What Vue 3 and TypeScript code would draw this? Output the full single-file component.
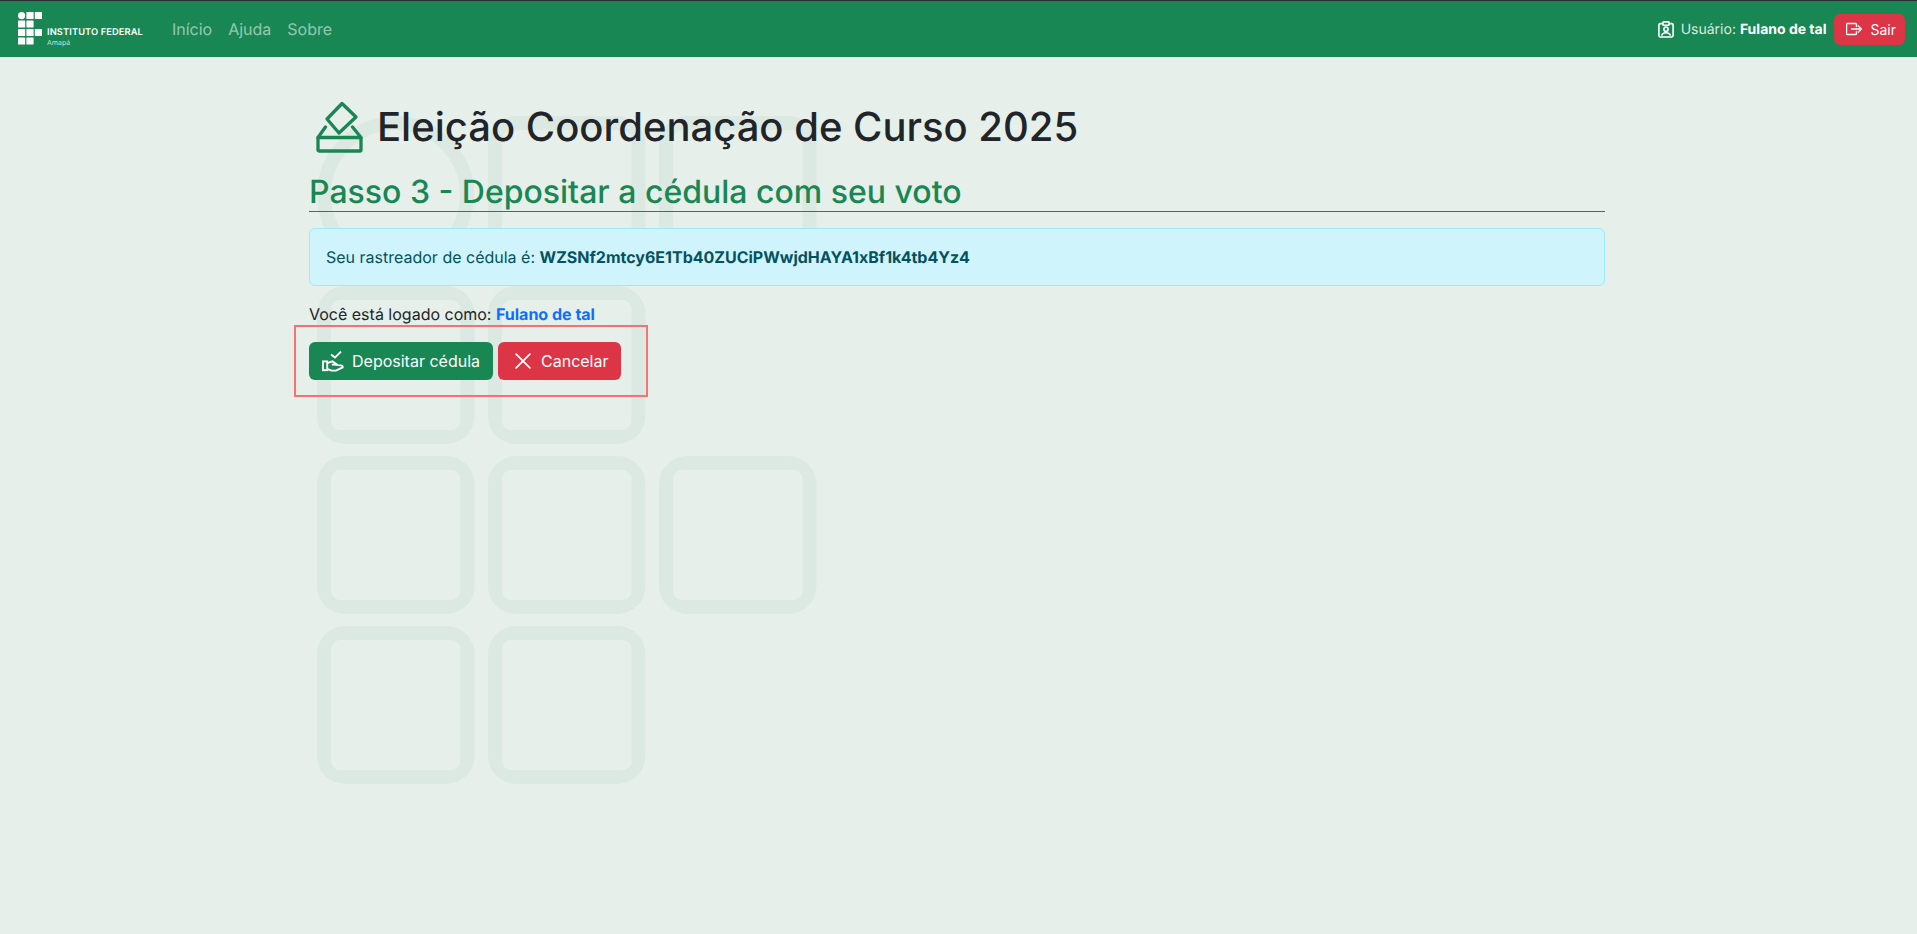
<script setup lang="ts">
const tracker = 'WZSNf2mtcy6E1Tb40ZUCiPWwjdHAYA1xBf1k4tb4Yz4'
const userName = 'Fulano de tal'

const navLinks = ['Início', 'Ajuda', 'Sobre']

// watermark: IF logo grid, [col, row]
const cells = [
  [1, 0], [2, 0],
  [0, 1], [1, 1],
  [0, 2], [1, 2], [2, 2],
  [0, 3], [1, 3],
]
</script>

<template>
  <div class="page">
    <svg class="watermark" width="510" height="680" viewBox="0 0 510 680" aria-hidden="true">
      <circle cx="78.5" cy="78.5" r="71.5" fill="none" stroke="#dce9e2" stroke-width="14" />
      <g v-for="c in cells" :key="c.join('-')">
        <rect :x="c[0] * 171" :y="c[1] * 170" width="157.5" height="158" rx="28" fill="#dce9e2" />
        <rect :x="c[0] * 171 + 14" :y="c[1] * 170 + 14" width="129.5" height="130" rx="9" fill="#e6efe9" />
      </g>
    </svg>

    <nav class="navbar">
      <a class="brand">
        <svg class="brand__mark" width="26" height="33" viewBox="0 0 26 33" fill="#fff">
          <circle cx="3.6" cy="3.6" r="3.6" />
          <rect x="8.4" y="0" width="7.2" height="7" rx="0.6" />
          <rect x="16.8" y="0" width="7.2" height="7" rx="0.6" />
          <rect x="0" y="8.5" width="7.2" height="7" rx="0.6" />
          <rect x="8.4" y="8.5" width="7.2" height="7" rx="0.6" />
          <rect x="0" y="17" width="7.2" height="7" rx="0.6" />
          <rect x="8.4" y="17" width="7.2" height="7" rx="0.6" />
          <rect x="16.8" y="17" width="7.2" height="7" rx="0.6" />
          <rect x="0" y="25.5" width="7.2" height="7" rx="0.6" />
          <rect x="8.4" y="25.5" width="7.2" height="7" rx="0.6" />
        </svg>
        <span class="brand__text">
          <b>INSTITUTO FEDERAL</b>
          <small>Amapá</small>
        </span>
      </a>
      <ul class="navbar__links">
        <li v-for="link in navLinks" :key="link"><a>{{ link }}</a></li>
      </ul>
      <div class="navbar__user">
        <svg width="16" height="17" viewBox="0 0 16 17" fill="none" stroke="#fff" stroke-width="1.6">
          <path d="M5 2.6H2.2A1.4 1.4 0 0 0 .9 4v10.6A1.4 1.4 0 0 0 2.2 16h11.6a1.4 1.4 0 0 0 1.3-1.4V4a1.4 1.4 0 0 0-1.3-1.4H11" />
          <rect x="5" y=".9" width="6" height="3.4" rx=".6" />
          <circle cx="8" cy="8.2" r="2.1" />
          <path d="M3.6 14.6c.5-2 2.2-2.9 4.4-2.9s3.9.9 4.4 2.9" />
        </svg>
        <span>Usuário: <strong>{{ userName }}</strong></span>
      </div>
      <button class="btn btn--danger btn--sm">
        <svg width="16" height="16" viewBox="0 0 16 16" fill="#fff" stroke="#fff" stroke-width=".5">
          <path fill-rule="evenodd" d="M10 12.5a.5.5 0 0 1-.5.5h-8a.5.5 0 0 1-.5-.5v-9a.5.5 0 0 1 .5-.5h8a.5.5 0 0 1 .5.5v2a.5.5 0 0 0 1 0v-2A1.5 1.5 0 0 0 9.5 2h-8A1.5 1.5 0 0 0 0 3.5v9A1.5 1.5 0 0 0 1.5 14h8a1.5 1.5 0 0 0 1.5-1.5v-2a.5.5 0 0 0-1 0z" />
          <path fill-rule="evenodd" d="M15.854 8.354a.5.5 0 0 0 0-.708l-3-3a.5.5 0 0 0-.708.708L14.293 7.5H5.5a.5.5 0 0 0 0 1h8.793l-2.147 2.146a.5.5 0 0 0 .708.708z" />
        </svg>
        Sair
      </button>
    </nav>

    <main class="container">
      <h1 class="title">
        <svg width="48" height="52" viewBox="0 0 48 52" fill="none" stroke="#198754" stroke-width="3.3" stroke-linejoin="round" stroke-linecap="round">
          <path d="M27 2.5 41 16 24 32 12 18Z" />
          <path d="M10.5 26 3 36.5M37.5 26 46 36.5" />
          <rect x="3" y="36.5" width="43" height="13.5" rx="1" />
        </svg>
        Eleição Coordenação de Curso 2025
      </h1>
      <h2 class="step">Passo 3 - Depositar a cédula com seu voto</h2>

      <div class="alert">Seu rastreador de cédula é: <strong>{{ tracker }}</strong></div>

      <p class="logged">Você está logado como: <strong>{{ userName }}</strong></p>

      <form class="actions" @submit.prevent>
        <button class="btn btn--success">
          <svg width="22" height="21" viewBox="0 0 22 21" fill="none" stroke="#fff" stroke-width="1.9">
            <path d="M9 3.4 13 6.6 19 .6" />
            <rect x="1" y="10.4" width="4.2" height="8.8" />
            <path d="M5.2 12.2 10.4 10.4 15 13.6H9.8M12.5 13.6 19 14.4c1.6.4 2 1.4 1.6 2L14 19.6H9.5L5.2 18" />
          </svg>
          Depositar cédula
        </button>
        <button class="btn btn--danger">
          <svg class="btn__x" width="20" height="20" viewBox="0 0 16 16" fill="#fff" stroke="#fff" stroke-width=".5">
            <path d="M2.146 2.854a.5.5 0 1 1 .708-.708L8 7.293l5.146-5.147a.5.5 0 0 1 .708.708L8.707 8l5.147 5.146a.5.5 0 0 1-.708.708L8 8.707l-5.146 5.147a.5.5 0 0 1-.708-.708L7.293 8z" />
          </svg>
          Cancelar
        </button>
      </form>
    </main>
  </div>
</template>

<style>
body {
  background: #e6efe9;
  margin: 0;
}
</style>

<style scoped>
.page {
  color: #212529;
  font-family: Inter, 'Liberation Sans', sans-serif;
  font-size: 16px;
  line-height: 1.5;
  min-height: 934px;
  position: relative;
  text-rendering: geometricPrecision;
}

.watermark {
  left: 317px;
  position: absolute;
  top: 116px;
}

.navbar {
  align-items: center;
  background: #198754;
  border-top: 1px solid #2b3035;
  box-sizing: border-box;
  display: flex;
  height: 57px;
  padding: 0 12px 0 18px;
  position: relative;
}

.brand {
  align-items: flex-end;
  color: #fff;
  display: flex;
  gap: 3px;
  margin-top: -1px;
}

.brand__text {
  display: flex;
  flex-direction: column;
  line-height: 1;
  margin-bottom: -3px;
}

.brand__text b {
  font-size: 9.3px;
  font-weight: 600;
  letter-spacing: 0.1px;
  line-height: 11px;
}

.brand__text small {
  color: rgba(255, 255, 255, 0.75);
  font-size: 7px;
  line-height: 10px;
}

.navbar__links {
  display: flex;
  list-style: none;
  margin: 0 0 0 21px;
  padding: 0;
}

.navbar__links a {
  color: rgba(255, 255, 255, 0.55);
  display: block;
  padding: 8px;
}

.navbar__user {
  align-items: center;
  color: rgba(255, 255, 255, 0.85);
  display: flex;
  font-size: 14px;
  gap: 7px;
  margin-left: auto;
  margin-right: 8px;
}

.navbar__user strong {
  color: #fff;
  font-weight: 700;
}

.container {
  box-sizing: border-box;
  display: flex;
  flex-direction: column;
  margin-left: 309px;
  padding-top: 44px;
  position: relative;
  width: 1296px;
}

.title {
  align-items: center;
  display: flex;
  font-size: 40px;
  font-weight: 500;
  gap: 14px;
  line-height: 52px;
  margin: 0 0 0 6px;
}

.step {
  border-bottom: 1px solid #198754;
  color: #198754;
  font-size: 32px;
  font-weight: 500;
  line-height: 38px;
  margin: 20px 0 16px;
}

.alert {
  background: #cff4fc;
  border: 1px solid #9eeaf9;
  border-radius: 6px;
  color: #055160;
  padding: 16px;
}

.alert strong {
  font-weight: 700;
}

.logged {
  margin: 16px 0 0;
}

.logged strong {
  color: #0d6efd;
  font-weight: 700;
}

.actions {
  align-self: flex-start;
  border: 2px solid #f87171;
  display: flex;
  gap: 5px;
  margin: -1px 0 0 -15px;
  padding: 15px 25px 15px 13px;
}

.btn {
  align-items: center;
  border: 1px solid transparent;
  border-radius: 6px;
  color: #fff;
  display: inline-flex;
  font-family: inherit;
  font-size: 16px;
  gap: 8px;
  height: 38px;
  line-height: 1.5;
  padding: 0 12px;
}

.btn--success {
  background: #198754;
}

.btn--danger {
  background: #dc3545;
}

.btn--sm {
  font-size: 14px;
  gap: 8px;
  height: 31px;
  padding: 0 8px 0 11px;
}

.btn__x {
  margin-left: 2px;
}
</style>
